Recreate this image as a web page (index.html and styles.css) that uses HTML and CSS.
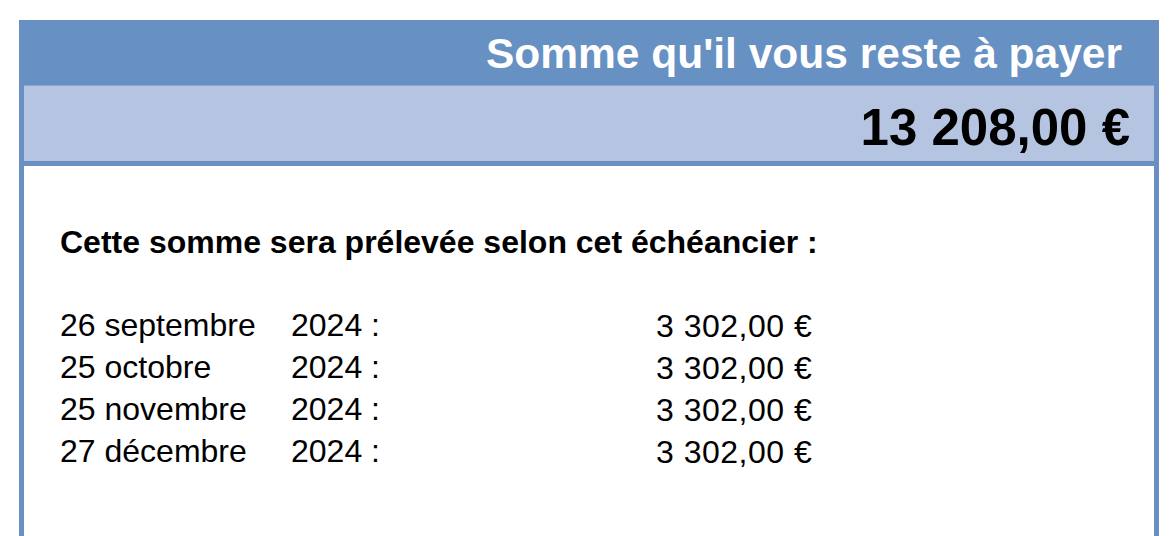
FILE: index.html
```html
<!DOCTYPE html>
<html lang="fr">
<head>
<meta charset="utf-8">
<link rel="stylesheet" href="styles.css">
</head>
<body>
<div class="box">
  <div class="title-bar">Somme qu'il vous reste à payer</div>
  <div class="total-bar">13 208,00 €</div>
  <div class="content">
    <div class="heading">Cette somme sera prélevée selon cet échéancier :</div>
    <div class="schedule">
      <span class="date">26 septembre</span><span class="year">2024 :</span><span class="amount">3 302,00 €</span>
      <span class="date">25 octobre</span><span class="year">2024 :</span><span class="amount">3 302,00 €</span>
      <span class="date">25 novembre</span><span class="year">2024 :</span><span class="amount">3 302,00 €</span>
      <span class="date">27 décembre</span><span class="year">2024 :</span><span class="amount">3 302,00 €</span>
    </div>
  </div>
</div>
</body>
</html>
```

FILE: styles.css
```css
html, body {
  margin: 0;
  padding: 0;
  background: #ffffff;
}
body {
  font-family: "Liberation Sans", Arial, Helvetica, sans-serif;
  color: #000;
}
.box {
  box-sizing: border-box;
  width: 1140px;
  margin: 20px 0 0 19px;
  border: 5px solid #6a8fc2;
  border-bottom: none;
  height: 540px;
}
.title-bar {
  box-sizing: border-box;
  height: 60px;
  background: #6790c3;
  color: #ffffff;
  font-weight: bold;
  font-size: 42.5px;
  line-height: 58px;
  padding-bottom: 2px;
  text-align: right;
  padding-right: 32px;
  white-space: nowrap;
}
.total-bar {
  box-sizing: border-box;
  height: 81px;
  background: #b5c4e0;
  border-top: 1px solid #8aa6d0;
  border-bottom: 5px solid #6a8fc2;
  font-weight: bold;
  font-size: 51px;
  line-height: 67px;
  padding-top: 8px;
  text-align: right;
  padding-right: 24px;
  white-space: nowrap;
}
.content {
  padding: 58px 0 0 36px;
}
.heading {
  font-weight: bold;
  font-size: 32px;
  line-height: 36px;
  white-space: nowrap;
}
.schedule {
  margin-top: 44px;
  display: grid;
  grid-template-columns: 231px 365px auto;
  font-size: 32px;
  line-height: 42px;
  white-space: nowrap;
}
.amount {
  letter-spacing: 0.5px;
  position: relative;
  top: 1px;
}
```
